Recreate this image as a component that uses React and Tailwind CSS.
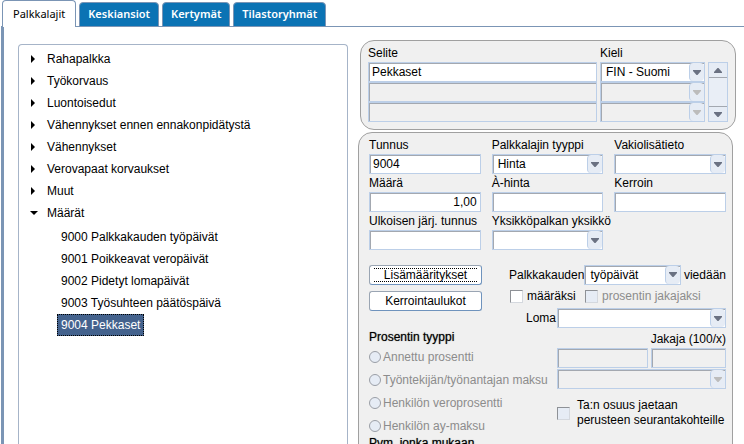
import React from 'react';
import clsx from 'clsx';

const tabs = ['Palkkalajit', 'Keskiansiot', 'Kertymät', 'Tilastoryhmät'];

const groups = [
  'Rahapalkka',
  'Työkorvaus',
  'Luontoisedut',
  'Vähennykset ennen ennakonpidätystä',
  'Vähennykset',
  'Verovapaat korvaukset',
  'Muut',
  'Määrät',
];

const items = [
  '9000 Palkkakauden työpäivät',
  '9001 Poikkeavat veropäivät',
  '9002 Pidetyt lomapäivät',
  '9003 Työsuhteen päätöspäivä',
  '9004 Pekkaset',
];

const percentTypes = [
  'Annettu prosentti',
  'Työntekijän/työnantajan maksu',
  'Henkilön veroprosentti',
  'Henkilön ay-maksu',
];

const boxClass =
  'block w-full rounded-none border border-[#bccfe8] bg-white text-black shadow-[inset_1px_1px_0_#a3a8b0] outline-none disabled:bg-[#f0f0f0] disabled:opacity-100';

const TextBox = ({ className, ...props }) => (
  <input type="text" className={clsx(boxClass, 'h-5 px-[3px]', className)} {...props} />
);

const Select = ({ id, value = '', label, disabled, className }) => (
  <div className={clsx('relative', className)}>
    <select
      id={id}
      aria-label={label}
      disabled={disabled}
      defaultValue={value}
      className={clsx(boxClass, 'h-5 appearance-none pl-[5px] pr-4')}
    >
      <option>{value}</option>
    </select>
    <span className="pointer-events-none absolute inset-y-px right-px flex w-[15px] items-center justify-center rounded-sm border-l border-[#bccfe8] bg-[#e6ecf5]">
      <svg width="8" height="5" viewBox="0 0 8 5">
        <path d="M0 0h8v1L4.500 5h-1L0 1z" fill={disabled ? '#bcbcbc' : '#6a7182'} />
      </svg>
    </span>
  </div>
);

const Field = ({ id, label, children }) => (
  <div>
    <label htmlFor={id} className="block h-[17px] whitespace-nowrap leading-4">
      {label}
    </label>
    {children}
  </div>
);

const CheckBox = ({ id, disabled }) => (
  <input
    id={id}
    type="checkbox"
    disabled={disabled}
    className="size-[13px] shrink-0 appearance-none border border-[#d4d8de] border-l-[#8e9196] border-t-[#8e9196] bg-white checked:bg-[#44628d] disabled:bg-[#e6ecf5]"
  />
);

const PushButton = ({ children, focused }) => (
  <button
    type="button"
    className="h-5 w-full rounded-[3px] border border-[#9aa5b3] border-b-[#6f93bd] border-r-[#6f93bd] bg-white px-1"
  >
    <span className={clsx('block leading-3', focused && 'border-y border-dotted border-black')}>
      {children}
    </span>
  </button>
);

const Tabs = () => (
  <nav className="flex h-[27px] shrink-0 items-end gap-[3px] pl-0.5 font-['Noto_Sans'] text-[11px]" role="tablist">
    {tabs.map((tab, i) => (
      <button
        key={tab}
        type="button"
        role="tab"
        aria-selected={i === 0}
        className={clsx(
          'relative z-10 rounded-t border border-[#7b95b5]',
          i === 0
            ? 'h-[27px] border-b-0 bg-white px-2.5 text-black'
            : 'h-[25px] bg-[#0b73b4] px-2 font-semibold text-white'
        )}
      >
        {tab}
      </button>
    ))}
  </nav>
);

const Tree = () => (
  <ul className="min-w-0 flex-1 rounded-t border border-b-0 border-[#a6b4c8] pl-2.5 pt-[3px]">
    {groups.map((group, i) => {
      const open = i === groups.length - 1;
      return (
        <li key={group}>
          <button type="button" className="flex h-[22px] items-center" aria-expanded={open}>
            <span className="flex w-[18px]">
              <svg width="9" height="9" viewBox="0 0 9 9">
                <path d={open ? 'M1 2h8L5 6z' : 'M2 0v8l4-4z'} />
              </svg>
            </span>
            {group}
          </button>
          {open && (
            <ul className="mt-0.5 pl-7">
              {items.map((item, n) => (
                <li key={item} className="flex h-[22px] items-center">
                  <button
                    type="button"
                    className={clsx(
                      'h-[22px]',
                      n === 4 ? 'border border-dotted border-black bg-[#44628d] px-[3px] text-white' : 'px-1'
                    )}
                  >
                    {item}
                  </button>
                </li>
              ))}
            </ul>
          )}
        </li>
      );
    })}
  </ul>
);

const ScrollBar = () => (
  <div className="flex w-5 flex-col justify-between border border-[#bccfe8] bg-[#e9eef6]">
    {['Ylös', 'Alas'].map((name, i) => (
      <button
        key={name}
        type="button"
        aria-label={name}
        className={clsx(
          'flex h-[15px] items-center justify-center bg-[#e6ecf5]',
          i === 0 ? 'border-b border-[#a3a8b0]' : 'border-t border-[#a3a8b0]'
        )}
      >
        <svg width="8" height="5" viewBox="0 0 8 5">
          <path d={i === 0 ? 'M0 5h8V4L4.500 0h-1L0 4z' : 'M0 0h8v1L4.500 5h-1L0 1z'} fill="#6a7182" />
        </svg>
      </button>
    ))}
  </div>
);

const Descriptions = () => (
  <section className="ml-0.5 flex h-[90px] shrink-0 rounded-[14px] border border-[#a0a0a0] bg-[#f0f0f0] px-[7px] pt-1">
    <div className="grid flex-1 grid-cols-[1fr_105px] content-start gap-x-[3px]">
      <label htmlFor="selite" className="h-[17px] leading-4">Selite</label>
      <label htmlFor="kieli" className="h-[17px] leading-4">Kieli</label>
      <TextBox id="selite" defaultValue="Pekkaset" />
      <Select id="kieli" value="FIN - Suomi" />
      <TextBox aria-label="Selite 2" disabled />
      <Select label="Kieli 2" disabled />
      <TextBox aria-label="Selite 3" disabled />
      <Select label="Kieli 3" disabled />
    </div>
    <div className="ml-[3px] mt-[17px] flex h-[60px]">
      <ScrollBar />
    </div>
  </section>
);

const Details = () => (
  <section className="mr-[3px] shrink-0 rounded-[14px] border border-[#a0a0a0] bg-[#f0f0f0] pb-4 pl-2.5 pr-1.5 pt-1">
    <div className="grid grid-cols-3 gap-x-[11px] gap-y-px">
      <Field id="tunnus" label="Tunnus"><TextBox id="tunnus" defaultValue="9004" /></Field>
      <Field id="tyyppi" label="Palkkalajin tyyppi"><Select id="tyyppi" value="Hinta" /></Field>
      <Field id="lisatieto" label="Vakiolisätieto"><Select id="lisatieto" /></Field>
      <Field id="maara" label="Määrä"><TextBox id="maara" className="text-right" defaultValue="1,00" /></Field>
      <Field id="ahinta" label="À-hinta"><TextBox id="ahinta" /></Field>
      <Field id="kerroin" label="Kerroin"><TextBox id="kerroin" /></Field>
      <Field id="ulkoinen" label="Ulkoisen järj. tunnus"><TextBox id="ulkoinen" /></Field>
      <Field id="yksikko" label="Yksikköpalkan yksikkö"><Select id="yksikko" /></Field>
    </div>

    <div className="mt-3.5 flex justify-between">
      <div className="flex w-[113px] flex-col gap-1.5 pt-px">
        <PushButton focused>Lisämääritykset</PushButton>
        <PushButton>Kerrointaulukot</PushButton>
      </div>
      <div className="w-[217px]">
        <div className="flex h-[21px] items-center">
          <label htmlFor="kausi" className="w-[76px]">Palkkakauden</label>
          <Select id="kausi" value="työpäivät" className="w-[98px]" />
          <span className="pl-[3px]">viedään</span>
        </div>
        <div className="flex h-[22px] items-center pl-px">
          <CheckBox id="maaraksi" />
          <label htmlFor="maaraksi" className="w-[62px] pl-1">määräksi</label>
          <CheckBox id="jakajaksi" disabled />
          <label htmlFor="jakajaksi" className="pl-1 text-[#8c8c8c]">prosentin jakajaksi</label>
        </div>
        <div className="flex h-[22px] items-center">
          <label htmlFor="loma" className="w-12 pr-px text-right">Loma</label>
          <Select id="loma" className="flex-1" />
        </div>
      </div>
    </div>

    <div className="flex justify-between">
      <fieldset className="min-w-0">
        <legend className="float-left h-4 w-full leading-4 [text-shadow:0_0_1px_#0009]">
          Prosentin tyyppi
        </legend>
        {percentTypes.map((type) => (
          <label key={type} className="clear-both flex h-[23px] items-center whitespace-nowrap text-[#8c8c8c]">
            <input
              type="radio"
              name="prosentti"
              disabled
              className="mr-0.5 size-3 appearance-none rounded-full border border-[#9a9ea6] bg-[#e6ecf5]"
            />
            {type}
          </label>
        ))}
      </fieldset>
      <div className="w-[169px] pt-0.5">
        <label htmlFor="jakaja" className="block h-[17px] text-right leading-4">Jakaja (100/x)</label>
        <div className="flex gap-[3px]">
          <TextBox aria-label="Prosentti" disabled />
          <div className="w-[75px] shrink-0">
            <TextBox id="jakaja" disabled />
          </div>
        </div>
        <Select label="Maksu" disabled className="mt-px" />
        <div className="mt-[9px] flex items-center gap-[7px]">
          <CheckBox id="osuus" disabled />
          <label htmlFor="osuus" className="whitespace-nowrap leading-[15px]">
            Ta:n osuus jaetaan
            <br />
            perusteen seurantakohteille
          </label>
        </div>
      </div>
    </div>
    <h2 className="leading-3 [text-shadow:0_0_1px_#0009]">Pvm. jonka mukaan</h2>
  </section>
);

export default function App() {
  return (
    <div className="flex h-screen flex-col overflow-hidden bg-white font-['Liberation_Sans',sans-serif] text-xs text-black">
      <Tabs />
      <main className="-mt-px ml-px flex min-h-0 flex-1 gap-2.5 border-l-[3px] border-t border-[#7b95b5] pl-3.5 pr-2 pt-[17px]">
        <Tree />
        <div className="-mt-1 flex w-[378px] shrink-0 flex-col gap-0.5">
          <Descriptions />
          <Details />
        </div>
      </main>
    </div>
  );
}
